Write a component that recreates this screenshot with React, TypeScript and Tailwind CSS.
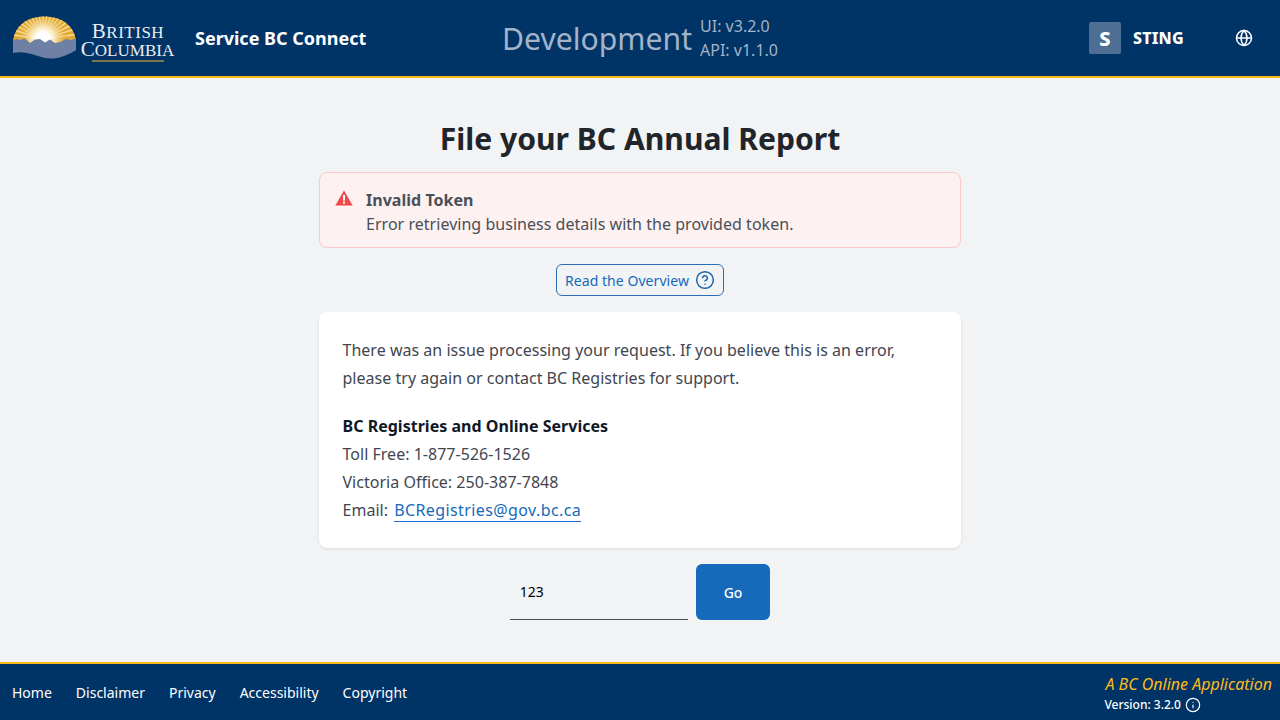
import React from "react";
import { Globe, Info, CircleHelp } from "lucide-react";

const rays = Array.from({ length: 19 }, (_, i) => -172 + i * (164 / 18));

function Logo() {
  const cx = 30;
  const cy = 24;
  return (
    <div className="flex items-start w-[163px] h-[46px] shrink-0">
      <svg width="64" height="46" viewBox="0 0 64 46" className="shrink-0">
        <defs>
          <clipPath id="dome"><path d="M0 26 C2 10 15 1.5 31.5 1.5 C48 1.5 61 10 63 26 L63 46 L0 46 Z" /></clipPath>
          <radialGradient id="glow" gradientUnits="userSpaceOnUse" cx="30" cy="24" r="22">
            <stop offset="0.3" stopColor="#ffffff" />
            <stop offset="0.5" stopColor="#fff6dc" stopOpacity="0.85" />
            <stop offset="1" stopColor="#f6dd9a" stopOpacity="0" />
          </radialGradient>
        </defs>
        <g clipPath="url(#dome)">
          <rect x="0" y="0" width="64" height="46" fill="#e2a936" />
          {rays.map((a, i) => {
            const r1 = ((a - 1.6) * Math.PI) / 180;
            const r2 = ((a + 1.6) * Math.PI) / 180;
            return (
              <polygon
                key={i}
                points={`${cx},${cy} ${cx + 40 * Math.cos(r1)},${cy + 40 * Math.sin(r1)} ${cx + 40 * Math.cos(r2)},${cy + 40 * Math.sin(r2)}`}
                fill="#f7dc96"
              />
            );
          })}
          <circle cx="30" cy="24" r="22" fill="url(#glow)" />
          <path d="M0 25.5 L4 24 L7 25 L12 23.5 L17 28 L22 24.5 L27 24 L32 27.5 L37 24.5 L42 28 L47 27 L53 24 L58 25 L63 23.5 L63 46 L0 46 Z" fill="#6f80a5" />
        </g>
        <path d="M0 38 C9 35.5 20 39 30 42.5 C40 45.5 52 42 63 35 L63 46 L0 46 Z" fill="#003366" />
      </svg>
      <div className="flex flex-col items-center w-[96px] ml-[3px] font-['Liberation_Serif',serif] text-[#e9edf2] whitespace-nowrap">
        <div className="text-[21px] leading-[17px] mt-[8px] tracking-[0.5px]">B<span className="text-[17px]">RITISH</span></div>
        <div className="text-[21px] leading-[17px] -ml-[1px]">C<span className="text-[17px]">OLUMBIA</span></div>
        <div className="w-[72px] h-[2px] bg-[#7c7451] mt-[1px]" />
      </div>
    </div>
  );
}

function WarnIcon() {
  return (
    <svg width="18" height="16" viewBox="0 0 18 16" className="shrink-0 mt-[2px]">
      <path d="M9 0.5 L17.7 15.5 L0.3 15.5 Z" fill="#f04a4a" strokeLinejoin="round" />
      <rect x="8" y="5" width="2" height="5.5" fill="#fff" />
      <rect x="8" y="11.6" width="2" height="2" fill="#fff" />
    </svg>
  );
}

export default function App() {
  return (
    <div className="w-full h-[720px] flex flex-col bg-[#f1f3f5] font-['Noto_Sans',sans-serif] overflow-hidden">
      <header className="h-[78px] shrink-0 bg-[#003366] border-b-2 border-[#fcba19] flex items-center pl-[13px] pr-[27px]">
        <Logo />
        <span className="ml-[19px] mt-[1px] w-[307px] text-[18px] font-bold text-white whitespace-nowrap">Service BC Connect</span>
        <span className="mt-[2px] text-[30.16px] text-[#a3b4c8] whitespace-nowrap">Development</span>
        <div className="ml-[8px] flex flex-col text-[16px] leading-[24px] text-[#a3b4c8] whitespace-nowrap">
          <span>UI: v3.2.0</span>
          <span>API: v1.1.0</span>
        </div>
        <div className="ml-auto flex items-center">
          <div className="w-[32px] h-[32px] rounded-[2px] bg-[#4e6e94] flex items-center justify-center text-white font-extrabold text-[20px] pt-[1px]">S</div>
          <span className="ml-[12px] w-[102px] text-[16px] font-extrabold text-white tracking-[0.2px]">STING</span>
          <Globe size={18} strokeWidth={2} className="text-white" />
        </div>
      </header>

      <main className="flex-1 flex flex-col items-center pt-[40px]">
        <h1 className="text-[30.1px] leading-[42px] font-bold text-[#212529]">File your BC Annual Report</h1>
        <div className="mt-[12px] w-[642px] h-[76px] rounded-[8px] bg-[#fef1f1] border border-[#fbcaca] flex items-start pl-[15px] pt-[15px] gap-[13px]">
          <WarnIcon />
          <div className="text-[16px] leading-[24px] text-[#495057] tracking-[0.03px]">
            <div className="font-bold">Invalid Token</div>
            <div>Error retrieving business details with the provided token.</div>
          </div>
        </div>
        <button className="mt-[16px] h-[32px] w-[168.5px] rounded-[6px] border border-[#2a6db5] flex items-center justify-center gap-[6px] text-[14px] tracking-[0.05px] text-[#1669bb]">
          Read the Overview
          <CircleHelp size={20} strokeWidth={1.75} className="text-[#1a5fa8]" />
        </button>
        <div className="mt-[16px] w-[642px] h-[236px] rounded-[8px] bg-white shadow-[0_1px_3px_rgba(0,0,0,0.1)] pl-[23.5px] pr-[24px] pt-[24px] text-[16px] leading-[28px] tracking-[0.02px] text-[#3f4650]">
          <p>There was an issue processing your request. If you believe this is an error,<br />please try again or contact BC Registries for support.</p>
          <p className="mt-[20px] font-bold text-[#111827]">BC Registries and Online Services</p>
          <p>Toll Free: 1-877-526-1526</p>
          <p>Victoria Office: 250-387-7848</p>
          <p>Email: <a className="ml-[2px] text-[#1669bb] border-b border-[#1a6fcf] tracking-[0.4px]">BCRegistries@gov.bc.ca</a></p>
        </div>
        <div className="mt-[16px] flex gap-[8px]">
          <div className="w-[178px] h-[56px] border-b border-[#495057] pl-[10px] pt-[18px] text-[14px] leading-[20px] text-black">123</div>
          <button className="w-[74.5px] h-[56px] rounded-[6px] bg-[#1669bb] text-white text-[14px] font-medium">Go</button>
        </div>
      </main>

      <footer className="h-[58px] shrink-0 bg-[#003366] border-t-2 border-[#fcba19] flex items-center justify-between pl-[12px] pr-[8px]">
        <nav className="flex gap-[24px] text-[14px] font-normal text-white">
          <span>Home</span>
          <span>Disclaimer</span>
          <span>Privacy</span>
          <span>Accessibility</span>
          <span>Copyright</span>
        </nav>
        <div className="flex flex-col items-start pt-[3px]">
          <span className="text-[16px] leading-[22px] italic text-[#fcba19] whitespace-nowrap">A BC Online Application</span>
          <span className="-ml-[1px] mt-[1px] flex items-center gap-[4px] text-[12px] leading-[18px] font-medium text-white">Version: 3.2.0 <Info size={16} strokeWidth={1.75} /></span>
        </div>
      </footer>
    </div>
  );
}
